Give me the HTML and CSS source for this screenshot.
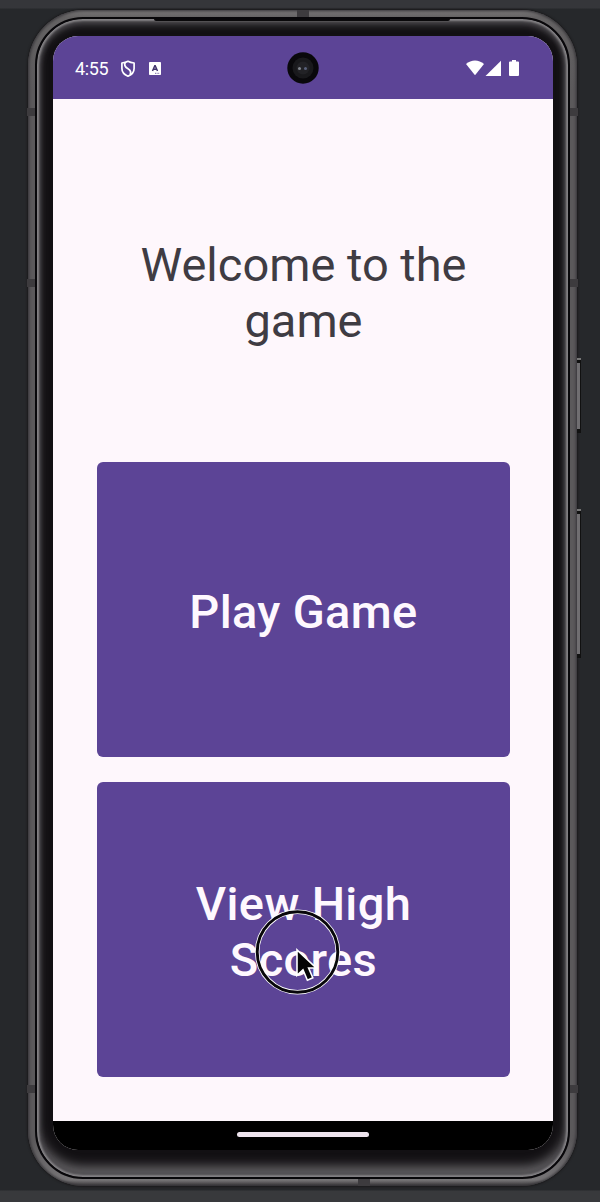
FILE: index.html
```html
<!DOCTYPE html>
<html lang="en">
<head>
<meta charset="utf-8">
<title>Welcome to the game</title>
<link rel="stylesheet" href="styles.css">
</head>
<body>
<div class="phone">
  <i class="band band-top"></i><i class="band band-bottom"></i>
  <i class="band side left upper"></i><i class="band side left middle"></i><i class="band side left lower"></i>
  <i class="band side right upper"></i><i class="band side right middle"></i><i class="band side right lower"></i>
  <i class="key power"></i><i class="key volume"></i>
  <div class="bezel">
    <i class="speaker"></i>
    <div class="screen">
      <header class="status">
        <span class="time">4:55</span>
        <svg class="shield" width="16" height="18" viewBox="0 0 16 18" fill="none" stroke="#fff" stroke-width="1.700" stroke-linejoin="round"><path d="M8 1.300Q5.500 2.800 1.900 3v5.600c0 3.400 2.500 6.200 6.100 7.600 3.600-1.400 6.100-4.200 6.100-7.600V3Q10.500 2.800 8 1.300z"/><path d="M5.200 2.600C3.700 5.300 5.600 7.300 8 8.800c2.300 1.500 3.600 3.200 2 5.800"/></svg>
        <svg class="letter" width="12" height="13" viewBox="0 0 12 13"><rect width="12" height="13" rx=".8" fill="#fff"/><path d="M3.500 9 6 3.200 8.500 9M4.400 7.200h3.200" fill="none" stroke="#40336b" stroke-width="1.500" stroke-linejoin="bevel"/><path d="M6 11.300h4.800" stroke="#655397" stroke-width=".9" stroke-dasharray="1 .6"/></svg>
        <svg class="signals" width="54" height="17" viewBox="0 0 54 17" fill="#fff"><path d="M0 4.100C5.200-.7 12.800-.7 18 4.100L9 15.200z"/><path d="M19.500 16 35 .7V16z"/><path d="M46 0h4v1.500h2q1 0 1 1V15q0 1-1 1h-8q-1 0-1-1V2.500q0-1 1-1h2z"/></svg>
        <svg class="camera" width="32" height="32" viewBox="0 0 32 32"><circle cx="16" cy="16" r="15.700" fill="#09080b"/><circle cx="16" cy="16" r="10.500" fill="#19191c"/><circle cx="16" cy="16" r="6.500" fill="#222226"/><circle cx="12.500" cy="16.500" r="1.500" fill="#81858d"/><circle cx="18.500" cy="16.500" r="1.500" fill="#59617b"/></svg>
      </header>
      <main class="content">
        <h1 class="title">Welcome to the<br>game</h1>
        <button class="action">Play Game</button>
        <button class="action">View High<br>Scores</button>
      </main>
      <footer class="navigation"><i class="handle"></i></footer>
    </div>
  </div>
</div>
<svg class="pointer" width="88" height="88" viewBox="0 0 88 88"><circle cx="44.500" cy="44" r="40.300" fill="none" stroke="#fff" stroke-width="4.600"/><circle cx="44.500" cy="44" r="40.300" fill="none" stroke="#08070b" stroke-width="2.900"/><path d="M44 41.800v25.600l6-5.600 4.400 10.400 5.400-2.400-4.200-9.800h7.600z" fill="#050505" stroke="#fff" stroke-width="1.600"/></svg>
</body>
</html>
```
FILE: styles.css
```css
* { box-sizing: border-box; }
body {
  margin: 0;
  height: 1202px;
  padding: 10px 23px 0 28px;
  overflow: hidden;
  font-family: Roboto, sans-serif;
  background: linear-gradient(#35363a 8px, #26282b 9px 1190px, #38393c 1191px);
}
.phone {
  position: relative;
  height: 1176px;
  padding: 7px;
  border-radius: 56px;
  background: linear-gradient(#7b797a 0, #656364 7px, #5b595b 80px, #5b595b 1130px, #777577 1170px, #393739 1176px);
  box-shadow: 0 0 2px 1px #1b1a1c, inset 0 0 3px 1px #343236;
}
.bezel {
  position: relative;
  height: 1162px;
  padding: 17px 15px 27px 16px;
  border: 2px solid #08070a;
  border-radius: 48px;
  background: #121013;
  box-shadow: inset 0 0 2px 2px #858386, inset 0 0 4px 3px #454347, inset 0 5px 7px 1px #454347, inset 0 -11px 11px 0 #636164;
}
.screen {
  display: flex;
  flex-direction: column;
  height: 1114px;
  overflow: hidden;
  border-radius: 25px;
  background: #fef7fc;
}
.status {
  position: relative;
  display: flex;
  align-items: center;
  flex: 0 0 63px;
  padding: 2px 33px 0 22px;
  color: #fff;
  background: #5c4496;
}
.time { width: 45px; font-size: 18px; line-height: 22px; letter-spacing: -.35px; }
.letter { margin-left: 13px; }
.signals { margin-left: auto; }
.camera { position: absolute; left: 234px; top: 16px; }
.content {
  display: flex;
  flex-direction: column;
  height: 1022px;
  padding: 0 43px 0 44px;
}
.title {
  height: 363px;
  margin: 0;
  padding-top: 138px;
  color: #3f3c43;
  font-size: 47px;
  font-weight: 400;
  line-height: 56px;
  text-align: center;
}
.action {
  height: 295px;
  margin: 0 0 25px;
  padding: 4px 0 0;
  border: 0;
  border-radius: 6px;
  color: #fef8fe;
  background: #5c4496;
  font: 500 47px/56px Roboto, sans-serif;
  letter-spacing: .35px;
}
.navigation {
  flex: 1;
  display: flex;
  justify-content: center;
  padding-top: 11px;
  background: #000;
}
.handle { width: 132px; height: 5px; border-radius: 3px; background: #eee4ee; }
.speaker {
  position: absolute;
  left: 117px;
  top: 0;
  width: 296px;
  height: 2px;
  border-radius: 0 0 3px 3px;
  background: #09080a;
}
.band { position: absolute; background: #3d3b3e; }
.band-top { left: 269px; top: 0; width: 12px; height: 7px; }
.band-bottom { left: 330px; bottom: 0; width: 12px; height: 7px; }
.side { width: 8px; height: 8px; }
.left { left: -1px; }
.right { right: -1px; }
.upper { top: 98px; }
.middle { top: 269px; }
.lower { top: 1075px; }
.key {
  position: absolute;
  left: 549px;
  width: 4px;
  border: solid #111;
  border-width: 3px 1px 4px 0;
  background: #706e71;
  box-shadow: 0 -2px #777;
}
.power { top: 350px; height: 73px; }
.volume { top: 501px; height: 147px; }
.pointer { position: absolute; left: 253px; top: 908px; }
```
